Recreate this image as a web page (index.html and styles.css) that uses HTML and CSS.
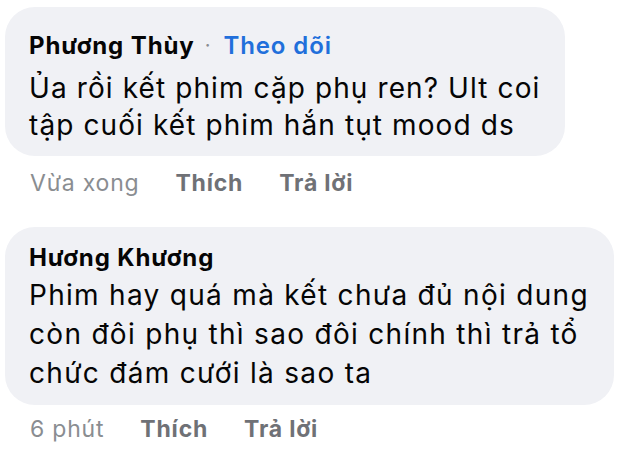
FILE: index.html
```html
<!DOCTYPE html>
<html lang="vi">
<head>
  <meta charset="UTF-8">
  <meta name="viewport" content="width=device-width, initial-scale=1.0">
  <title>Bình luận</title>
  <link rel="stylesheet" href="styles.css">
</head>
<body>
  <div class="comments">
    <div class="comment first">
      <div class="bubble">
        <div class="author">
          <span class="name">Phương Thùy</span>
          <span class="dot">·</span>
          <a href="#" class="follow">Theo dõi</a>
        </div>
        <p class="text">Ủa rồi kết phim cặp phụ ren? Ult coi<br>tập cuối kết phim hắn tụt mood ds</p>
      </div>
      <div class="meta">
        <span class="time">Vừa xong</span>
        <a href="#" class="action">Thích</a>
        <a href="#" class="action">Trả lời</a>
      </div>
    </div>

    <div class="comment second">
      <div class="bubble">
        <div class="author">
          <span class="name">Hương Khương</span>
        </div>
        <p class="text">Phim hay quá mà kết chưa đủ nội dung<br>còn đôi phụ thì sao đôi chính thì trả tổ<br>chức đám cưới là sao ta</p>
      </div>
      <div class="meta">
        <span class="time">6 phút</span>
        <a href="#" class="action">Thích</a>
        <a href="#" class="action">Trả lời</a>
      </div>
    </div>
  </div>
</body>
</html>
```

FILE: styles.css
```css
body {
  margin: 0;
  padding: 0;
  background-color: #fff;
  font-family: Inter, "Noto Sans", sans-serif;
  color: #050505;
}

.comments {
  padding: 7px 0 0 5px;
}

.comment {
  display: flex;
  flex-direction: column;
  align-items: flex-start;
}

.bubble {
  background-color: #f0f1f5;
  border-radius: 30px;
  padding: 24px 25px 12px 24px;
}

.second .bubble {
  padding-top: 16px;
}

.author {
  display: flex;
  align-items: baseline;
  font-size: 24px;
  line-height: 30px;
  letter-spacing: 0.9px;
}

.name {
  font-weight: 700;
}

.dot {
  position: relative;
  top: -2px;
  color: #8a8d91;
  font-size: 20px;
  margin: 0 12px 0 10px;
}

.follow {
  color: #216fdb;
  font-weight: 600;
  text-decoration: none;
}

.text {
  margin: 8px 0 0;
  font-size: 28px;
  line-height: 37px;
  letter-spacing: 1.1px;
}

.second .text {
  margin-top: 3px;
  line-height: 39px;
  letter-spacing: 1.3px;
}

.meta {
  display: flex;
  gap: 36px;
  padding: 12px 0 0 25px;
  font-size: 23px;
  line-height: 30px;
  letter-spacing: 0.8px;
  color: #8a8d91;
}

.second .meta {
  padding-top: 9px;
}

.action {
  color: #6f7176;
  font-weight: 700;
  text-decoration: none;
}

.second {
  margin-top: 29px;
}
```
